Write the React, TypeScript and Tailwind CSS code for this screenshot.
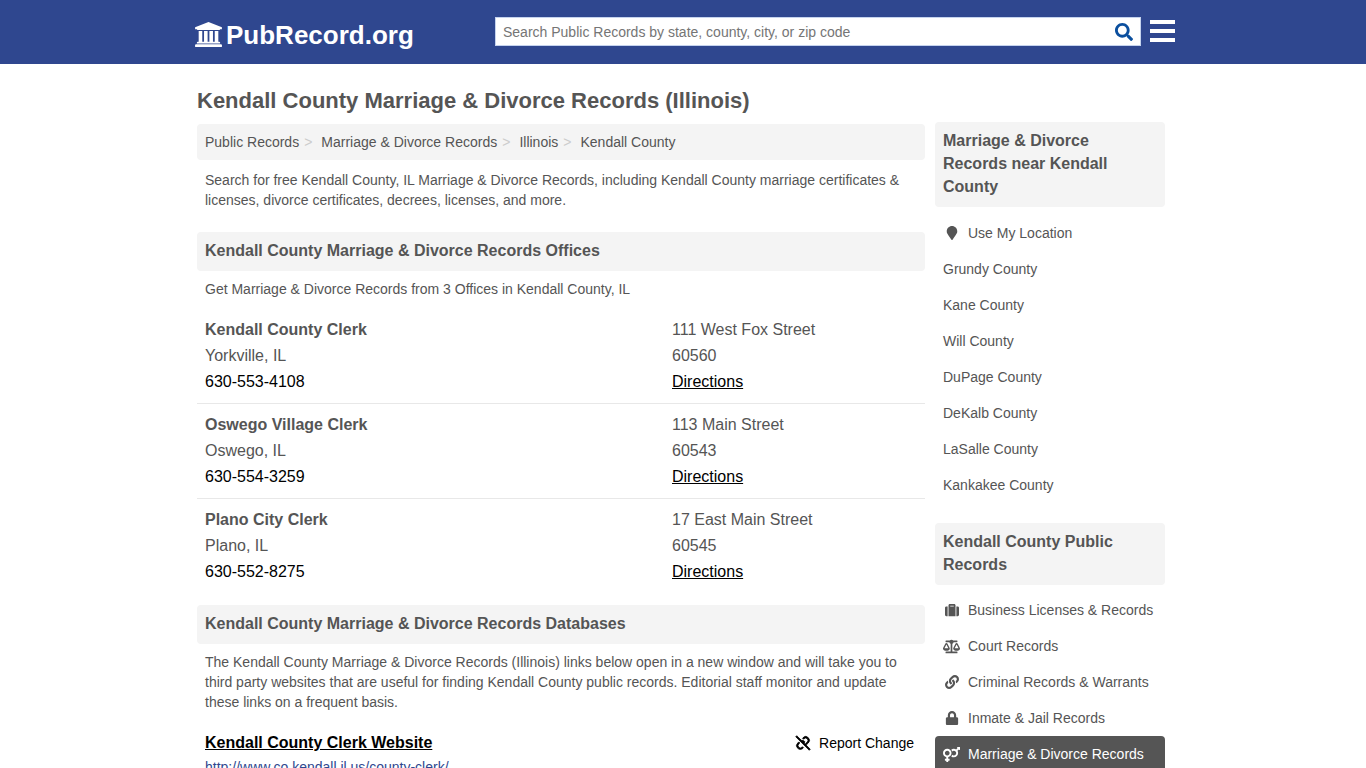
import type { ReactNode } from 'react';
import type { IconType } from 'react-icons';
import {
  FaBalanceScale,
  FaLink,
  FaLock,
  FaMapMarker,
  FaSearch,
  FaSuitcase,
  FaVenusMars,
} from 'react-icons/fa';
import { BiUnlink } from 'react-icons/bi';

const crumbs = ['Public Records', 'Marriage & Divorce Records', 'Illinois', 'Kendall County'];

const offices = [
  { name: 'Kendall County Clerk', city: 'Yorkville, IL', phone: '630-553-4108', street: '111 West Fox Street', zip: '60560' },
  { name: 'Oswego Village Clerk', city: 'Oswego, IL', phone: '630-554-3259', street: '113 Main Street', zip: '60543' },
  { name: 'Plano City Clerk', city: 'Plano, IL', phone: '630-552-8275', street: '17 East Main Street', zip: '60545' },
];

const nearby = [
  'Grundy County',
  'Kane County',
  'Will County',
  'DuPage County',
  'DeKalb County',
  'LaSalle County',
  'Kankakee County',
];

type SideItem = { label: string; icon?: IconType; wide?: boolean; active?: boolean };

const categories: SideItem[] = [
  { label: 'Business Licenses & Records', icon: FaSuitcase },
  { label: 'Court Records', icon: FaBalanceScale, wide: true },
  { label: 'Criminal Records & Warrants', icon: FaLink },
  { label: 'Inmate & Jail Records', icon: FaLock },
  { label: 'Marriage & Divorce Records', icon: FaVenusMars, wide: true, active: true },
];

function BankLogo() {
  return (
    <svg viewBox="0 0 1920 1792" className="mb-[2px] h-[25px] w-[27px]" fill="currentColor" aria-hidden="true">
      <path d="M960 0l960 384v128h-128q0 26-20.500 45t-48.500 19h-1526q-28 0-48.500-19t-20.500-45h-128v-128z" />
      <path d="M256 640h256v768h128v-768h256v768h128v-768h256v768h128v-768h256v768h59q28 0 48.500 19t20.500 45v64h-1664v-64q0-26 20.500-45t48.500-19h59v-768z" />
      <path d="M1851 1600q28 0 48.500 19t20.500 45v128h-1920v-128q0-26 20.500-45t48.500-19h1782z" />
    </svg>
  );
}

function Header() {
  return (
    <header className="bg-[#2f478f]">
      <div className="mx-auto flex h-16 max-w-[984px] items-center pl-1">
        <a href="#" className="flex items-center gap-1 pt-[6px] text-[26px] font-bold leading-8 text-white">
          <BankLogo />
          PubRecord.org
        </a>
        <form className="mb-[2px] ml-auto flex h-[29px] w-[646px] border border-[#c5d3ee] bg-white pt-[2px]" role="search">
          <input
            type="text"
            aria-label="Search Public Records"
            placeholder="Search Public Records by state, county, city, or zip code"
            className="min-w-0 flex-1 px-[7px] text-sm text-[#555] outline-none placeholder:text-[#757575]"
          />
          <button type="submit" aria-label="Search" className="px-[7px] text-[#0b4f9e]">
            <FaSearch className="size-[18px]" />
          </button>
        </form>
        <button type="button" aria-label="Menu" className="ml-[9px] flex flex-col gap-[5px] pb-[2px]">
          <span className="h-1 w-[25px] bg-white" />
          <span className="h-1 w-[25px] bg-white" />
          <span className="h-1 w-[25px] bg-white" />
        </button>
      </div>
    </header>
  );
}

function SectionTitle({ children }: { children: ReactNode }) {
  return (
    <h2 className="rounded-sm bg-[#f4f4f4] px-2 pb-[9px] pt-[7px] text-base font-bold leading-[23px]">
      {children}
    </h2>
  );
}

function SideLink({ label, icon: Icon, wide, active }: SideItem) {
  return (
    <li>
      <a
        href="#"
        className={`flex h-9 items-center gap-2 px-2 text-sm ${active ? 'rounded-t-sm bg-[#555] text-white' : ''}`}
      >
        {Icon && (
          <span className="flex w-[17px] justify-center">
            <Icon className={wide ? 'size-[17px]' : 'size-[14px]'} aria-hidden="true" />
          </span>
        )}
        {label}
      </a>
    </li>
  );
}

function Sidebar() {
  return (
    <aside className="mt-[58px] w-[230px] shrink-0">
      <SectionTitle>Marriage &amp; Divorce Records near Kendall County</SectionTitle>
      <ul className="mb-5 mt-2">
        <SideLink label="Use My Location" icon={FaMapMarker} />
        {nearby.map((county) => (
          <SideLink key={county} label={county} />
        ))}
      </ul>
      <SectionTitle>Kendall County Public Records</SectionTitle>
      <ul className="mt-[7px]">
        {categories.map((item) => (
          <SideLink key={item.label} {...item} />
        ))}
      </ul>
    </aside>
  );
}

export default function App() {
  return (
    <div className="h-screen overflow-hidden bg-white font-['Liberation_Sans',Arial,sans-serif] text-[#555]">
      <Header />
      <div className="mx-auto flex max-w-[984px] gap-[10px] pl-[6px] pr-[10px]">
        <main className="min-w-0 flex-1">
          <h1 className="pb-[7px] pt-[21px] text-[22px] font-bold leading-8">
            Kendall County Marriage &amp; Divorce Records (Illinois)
          </h1>
          <nav aria-label="Breadcrumb" className="rounded-sm bg-[#f4f4f4] px-2 py-2">
            <ol className="flex text-sm leading-5">
              {crumbs.map((crumb, i) => (
                <li key={crumb}>
                  <a href="#">{crumb}</a>
                  {i < crumbs.length - 1 && <span className="ml-[5px] mr-[9px] text-[#ccc]">&gt;</span>}
                </li>
              ))}
            </ol>
          </nav>
          <p className="mb-[22px] mt-[10px] px-2 text-sm leading-5">
            Search for free Kendall County, IL Marriage &amp; Divorce Records, including Kendall County marriage
            certificates &amp; licenses, divorce certificates, decrees, licenses, and more.
          </p>

          <SectionTitle>Kendall County Marriage &amp; Divorce Records Offices</SectionTitle>
          <p className="mb-[10px] mt-2 px-2 text-sm leading-5">
            Get Marriage &amp; Divorce Records from 3 Offices in Kendall County, IL
          </p>
          <div className="mb-3 divide-y divide-[#e8e8e8]">
            {offices.map((office) => (
              <section key={office.name} className="flex px-2 py-2 text-base leading-[26px]">
                <div className="flex-1">
                  <h3 className="font-bold">{office.name}</h3>
                  <p>{office.city}</p>
                  <a href="#" className="text-black">{office.phone}</a>
                </div>
                <div className="w-[245px]">
                  <p>{office.street}</p>
                  <p>{office.zip}</p>
                  <a href="#" className="text-black underline">Directions</a>
                </div>
              </section>
            ))}
          </div>

          <SectionTitle>Kendall County Marriage &amp; Divorce Records Databases</SectionTitle>
          <p className="mb-[19px] mt-2 px-2 text-sm leading-5">
            The Kendall County Marriage &amp; Divorce Records (Illinois) links below open in a new window and will
            take you to third party websites that are useful for finding Kendall County public records. Editorial
            staff monitor and update these links on a frequent basis.
          </p>
          <div className="flex items-center justify-between pl-2 pr-[11px]">
            <a href="#" className="text-base font-bold leading-6 text-black underline">
              Kendall County Clerk Website
            </a>
            <a href="#" className="flex items-center gap-[7px] text-sm leading-6 text-black">
              <BiUnlink className="size-[18px] stroke-1" aria-hidden="true" />
              Report Change
            </a>
          </div>
          <a href="#" className="block px-2 text-sm leading-6 text-[#2f478f]">
            http://www.co.kendall.il.us/county-clerk/
          </a>
        </main>
        <Sidebar />
      </div>
    </div>
  );
}
